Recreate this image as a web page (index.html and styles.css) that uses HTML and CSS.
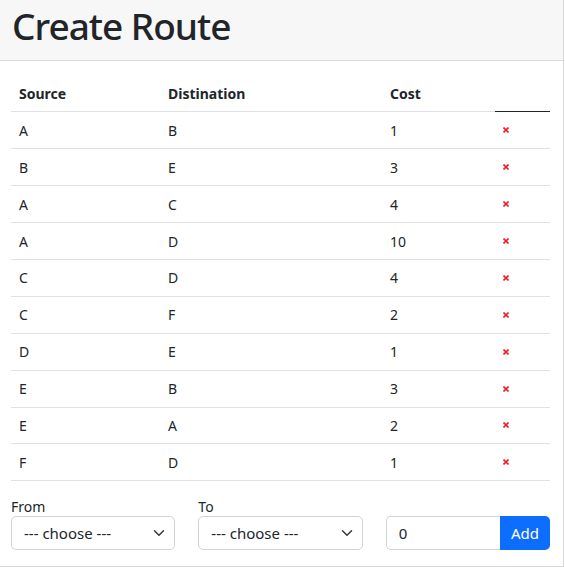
FILE: index.html
```html
<!DOCTYPE html>
<html lang="en">
<head>
<meta charset="utf-8">
<title>Create Route</title>
<link rel="stylesheet" href="styles.css">
</head>
<body>
<div class="card">
  <div class="card-header">
    <h1 class="title">Create Route</h1>
  </div>
  <div class="card-body">
    <table class="routes">
      <colgroup>
        <col class="c-src"><col class="c-dst"><col class="c-cost"><col class="c-act">
      </colgroup>
      <thead>
        <tr><th>Source</th><th>Distination</th><th>Cost</th><th class="act"></th></tr>
      </thead>
      <tbody>
        <tr><td>A</td><td>B</td><td>1</td><td><button class="del" type="button" aria-label="Delete"><svg viewBox="0 0 6 6" width="6" height="6"><path d="M0.5 0.5L5.5 5.5M5.5 0.5L0.5 5.5"/></svg></button></td></tr>
        <tr><td>B</td><td>E</td><td>3</td><td><button class="del" type="button" aria-label="Delete"><svg viewBox="0 0 6 6" width="6" height="6"><path d="M0.5 0.5L5.5 5.5M5.5 0.5L0.5 5.5"/></svg></button></td></tr>
        <tr><td>A</td><td>C</td><td>4</td><td><button class="del" type="button" aria-label="Delete"><svg viewBox="0 0 6 6" width="6" height="6"><path d="M0.5 0.5L5.5 5.5M5.5 0.5L0.5 5.5"/></svg></button></td></tr>
        <tr><td>A</td><td>D</td><td>10</td><td><button class="del" type="button" aria-label="Delete"><svg viewBox="0 0 6 6" width="6" height="6"><path d="M0.5 0.5L5.5 5.5M5.5 0.5L0.5 5.5"/></svg></button></td></tr>
        <tr><td>C</td><td>D</td><td>4</td><td><button class="del" type="button" aria-label="Delete"><svg viewBox="0 0 6 6" width="6" height="6"><path d="M0.5 0.5L5.5 5.5M5.5 0.5L0.5 5.5"/></svg></button></td></tr>
        <tr><td>C</td><td>F</td><td>2</td><td><button class="del" type="button" aria-label="Delete"><svg viewBox="0 0 6 6" width="6" height="6"><path d="M0.5 0.5L5.5 5.5M5.5 0.5L0.5 5.5"/></svg></button></td></tr>
        <tr><td>D</td><td>E</td><td>1</td><td><button class="del" type="button" aria-label="Delete"><svg viewBox="0 0 6 6" width="6" height="6"><path d="M0.5 0.5L5.5 5.5M5.5 0.5L0.5 5.5"/></svg></button></td></tr>
        <tr><td>E</td><td>B</td><td>3</td><td><button class="del" type="button" aria-label="Delete"><svg viewBox="0 0 6 6" width="6" height="6"><path d="M0.5 0.5L5.5 5.5M5.5 0.5L0.5 5.5"/></svg></button></td></tr>
        <tr><td>E</td><td>A</td><td>2</td><td><button class="del" type="button" aria-label="Delete"><svg viewBox="0 0 6 6" width="6" height="6"><path d="M0.5 0.5L5.5 5.5M5.5 0.5L0.5 5.5"/></svg></button></td></tr>
        <tr><td>F</td><td>D</td><td>1</td><td><button class="del" type="button" aria-label="Delete"><svg viewBox="0 0 6 6" width="6" height="6"><path d="M0.5 0.5L5.5 5.5M5.5 0.5L0.5 5.5"/></svg></button></td></tr>
      </tbody>
    </table>
    <form class="add-form">
      <div class="field">
        <label class="label" for="from">From</label>
        <div class="select-wrap">
          <select id="from" class="select"><option>--- choose ---</option></select>
          <svg class="chev" viewBox="0 0 16 16" width="12" height="12"><path d="M2 5l6 6 6-6"/></svg>
        </div>
      </div>
      <div class="field">
        <label class="label" for="to">To</label>
        <div class="select-wrap">
          <select id="to" class="select"><option>--- choose ---</option></select>
          <svg class="chev" viewBox="0 0 16 16" width="12" height="12"><path d="M2 5l6 6 6-6"/></svg>
        </div>
      </div>
      <div class="field">
        <span class="label">&nbsp;</span>
        <div class="input-group">
          <input class="cost-input" type="text" value="0">
          <button class="btn-add" type="button">Add</button>
        </div>
      </div>
    </form>
  </div>
</div>
</body>
</html>
```

FILE: styles.css
```css
* { box-sizing: border-box; }
html, body { margin: 0; padding: 0; background: #fff; }
body {
  font-family: "Noto Sans", "Open Sans", sans-serif;
  color: #212529;
  font-size: 14px;
}
.card {
  width: 564px;
  border-right: 1px solid #d9d9d9;
  border-bottom: 1px solid #d9d9d9;
  background: #fff;
}
.card-header {
  height: 61px;
  background: #f7f7f7;
  border-bottom: 1px solid #d9d9d9;
  padding: 0 12px;
  display: flex;
  align-items: center;
}
.title {
  margin: 0;
  font-size: 37px;
  font-weight: 500;
  letter-spacing: -1px;
  line-height: 1;
  color: #212529;
  padding-bottom: 10px;
}
.card-body {
  padding: 14px 13px 16px 11px;
}
.routes {
  width: 539px;
  border-collapse: collapse;
  table-layout: fixed;
}
.c-src { width: 149px; }
.c-dst { width: 222px; }
.c-cost { width: 113px; }
.c-act { width: 55px; }
.routes th, .routes td {
  height: 36.9px;
  padding: 0 8px;
  text-align: left;
  border-bottom: 1px solid #dee2e6;
  font-size: 14px;
  vertical-align: middle;
}
.routes th { font-weight: 700; }
.routes th.act { border-bottom-color: #212529; }
.del {
  border: 0;
  background: none;
  padding: 0;
  margin: 0;
  display: flex;
  align-items: center;
  cursor: pointer;
}
.del svg { display: block; }
.del path { stroke: #f01a2a; stroke-width: 1.6; fill: none; }
.add-form {
  margin-top: 16px;
  display: grid;
  grid-template-columns: repeat(3, minmax(0, 1fr));
  column-gap: 23px;
}
.field { display: flex; flex-direction: column; min-width: 0; }
.label {
  font-size: 14px;
  line-height: 19px;
  height: 19px;
}
.select-wrap { position: relative; }
.select {
  appearance: none;
  -webkit-appearance: none;
  width: 100%;
  height: 34px;
  border: 1px solid #ced4da;
  border-radius: 5px;
  background: #fff;
  padding: 0 30px 0 12px;
  font-family: inherit;
  font-size: 15px;
  color: #212529;
}
.chev {
  position: absolute;
  right: 10px;
  top: 11px;
  pointer-events: none;
}
.chev path { fill: none; stroke: #343a40; stroke-width: 2; stroke-linecap: round; stroke-linejoin: round; }
.input-group { display: flex; height: 34px; }
.cost-input {
  flex: 1;
  min-width: 0;
  height: 34px;
  border: 1px solid #ced4da;
  border-right: 0;
  border-radius: 5px 0 0 5px;
  padding: 0 12px;
  font-family: inherit;
  font-size: 15px;
  color: #212529;
}
.btn-add {
  width: 50px;
  height: 34px;
  border: 0;
  border-radius: 0 5px 5px 0;
  background: #0d6efd;
  color: #fff;
  font-family: inherit;
  font-size: 15px;
  padding: 0;
}
```
